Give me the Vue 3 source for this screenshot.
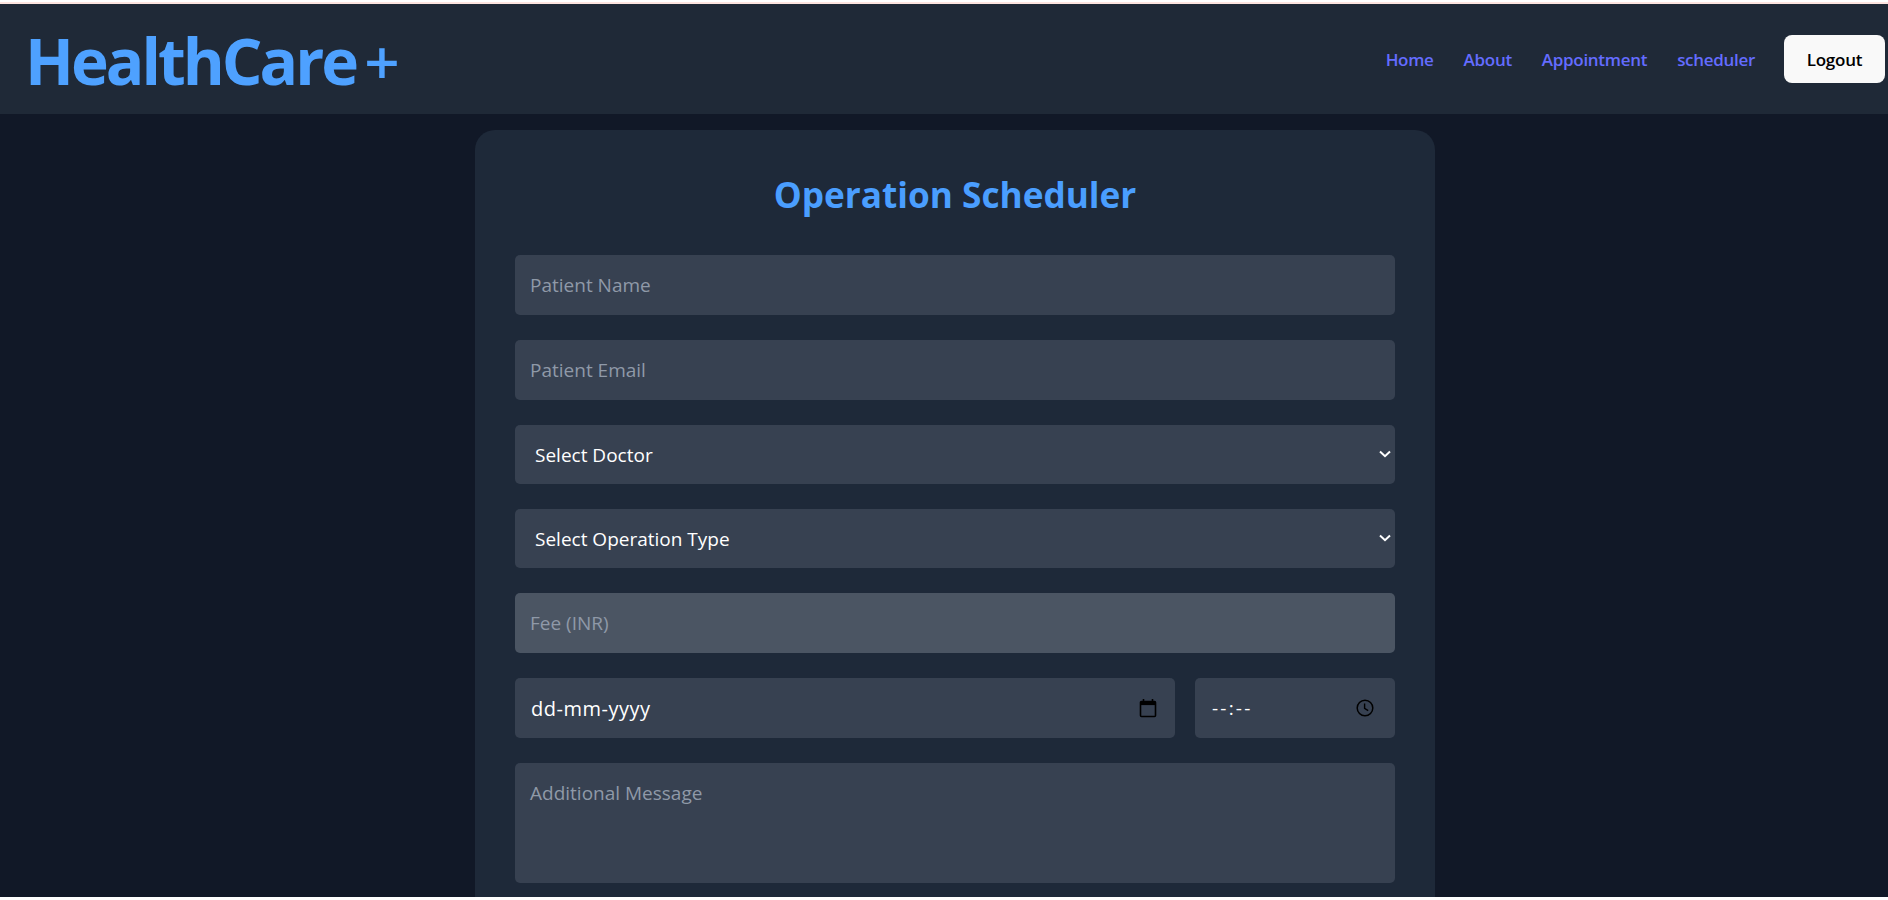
<script setup>
const links = ['Home', 'About', 'Appointment', 'scheduler']
</script>

<template>
  <div class="page">
    <div class="top-edge"></div>
    <header class="nav">
      <div class="logo">HealthCare<span class="plus">+</span></div>
      <nav class="links">
        <a v-for="l in links" :key="l" class="link" href="#">{{ l }}</a>
        <button class="logout" type="button">Logout</button>
      </nav>
    </header>
    <main class="main">
      <form class="card" @submit.prevent>
        <h2 class="title">Operation Scheduler</h2>
        <input class="field" type="text" placeholder="Patient Name" />
        <input class="field" type="email" placeholder="Patient Email" />
        <div class="select-wrap">
          <select class="field select">
            <option>Select Doctor</option>
          </select>
          <svg class="chevron" width="14" height="10" viewBox="0 0 14 10"><path d="M2 2.5 7 7.2 12 2.5" fill="none" stroke="#fff" stroke-width="2"/></svg>
        </div>
        <div class="select-wrap">
          <select class="field select">
            <option>Select Operation Type</option>
          </select>
          <svg class="chevron" width="14" height="10" viewBox="0 0 14 10"><path d="M2 2.5 7 7.2 12 2.5" fill="none" stroke="#fff" stroke-width="2"/></svg>
        </div>
        <input class="field fee" type="text" placeholder="Fee (INR)" />
        <div class="when">
          <div class="field picker date">
            <span class="date-text">dd-mm-yyyy</span>
            <svg width="18" height="20" viewBox="0 0 18 20"><path d="M2.5 3.5h13a1 1 0 0 1 1 1v13a1 1 0 0 1-1 1h-13a1 1 0 0 1-1-1v-13a1 1 0 0 1 1-1Z" fill="none" stroke="#000" stroke-width="1.6"/><path d="M1.5 3.5h15v3.6h-15z" fill="#000"/><path d="M4.5 1v3M13.5 1v3" stroke="#000" stroke-width="1.6"/></svg>
          </div>
          <div class="field picker time">
            <span class="time-text">--:--</span>
            <svg width="18" height="18" viewBox="0 0 18 18"><circle cx="9" cy="9" r="7.8" fill="none" stroke="#000" stroke-width="1.5"/><path d="M8.6 4.6v4.8l3.6 2.2" fill="none" stroke="#000" stroke-width="1.4"/></svg>
          </div>
        </div>
        <textarea class="field message" placeholder="Additional Message"></textarea>
      </form>
    </main>
    <div class="bottom-edge"></div>
  </div>
</template>

<style>
html, body { margin: 0; background: #fff; overflow: hidden; }
</style>

<style scoped>
.page {
  height: 900px;
  display: flex;
  flex-direction: column;
  overflow: hidden;
  font-family: "Open Sans", "Noto Sans", sans-serif;
  background: #111827;
}
.top-edge { height: 4px; flex: none; background: linear-gradient(#fff 0 2px, #fde4e0 2px); }
.bottom-edge { height: 3px; flex: none; background: #fff; }
.nav {
  flex: none;
  height: 110px;
  box-sizing: border-box;
  display: flex;
  align-items: center;
  justify-content: space-between;
  padding: 0 3px 0 25px;
  background: #1f2937;
}
.logo { font-size: 64px; font-weight: 700; color: #4ea1ff; line-height: 1; font-stretch: 90%; letter-spacing: -3px; position: relative; top: 2px; }
.plus { margin-left: 8px; font-weight: 600; font-size: 62px; letter-spacing: 0; }
.links { display: flex; align-items: center; gap: 30px; }
.link { color: #646cff; font-size: 17px; font-weight: 600; letter-spacing: -0.3px; text-decoration: none; }
.logout {
  width: 101px;
  height: 48px;
  margin-left: -1px;
  border: none;
  border-radius: 8px;
  background: #f9f9f9;
  color: #000;
  font: 600 17px "Open Sans", "Noto Sans", sans-serif;
  letter-spacing: -0.2px;
}
.main { flex: 1; min-height: 0; display: flex; justify-content: center; padding: 16px 0 0 22px; overflow: hidden; }
.card {
  width: 960px;
  flex: none;
  box-sizing: border-box;
  align-self: flex-start;
  padding: 40px;
  border-radius: 20px;
  background: #1e2939;
  display: flex;
  flex-direction: column;
  gap: 25px;
}
.title { margin: 0; height: 60px; line-height: 48px; text-align: center; color: #4a9eff; font-size: 35.2px; font-weight: 700; }
.field {
  box-sizing: border-box;
  width: 100%;
  height: 60px;
  padding: 0 15px;
  border: none;
  border-radius: 5px;
  background: #374151;
  color: #fff;
  font-family: inherit;
  font-size: 19px;
  outline: none;
  display: block;
}
.field::placeholder { color: #8f99a8; opacity: 1; }
.select-wrap { position: relative; }
.select { height: 59px; appearance: none; padding-left: 20px; }
.chevron { position: absolute; right: 3px; top: 24px; }
.fee { background: #4b5563; }
.when { display: flex; gap: 20px; }
.picker { display: flex; align-items: center; justify-content: space-between; padding-left: 16px; }
.date { flex: 1; min-width: 0; padding-right: 18px; }
.date-text { font-size: 20px; letter-spacing: 0.5px; }
.time { width: 200px; flex: none; padding-right: 21px; padding-left: 17px; }
.time-text { letter-spacing: 2.2px; }
.message { height: 120px; padding: 17px 15px; resize: none; }
</style>
